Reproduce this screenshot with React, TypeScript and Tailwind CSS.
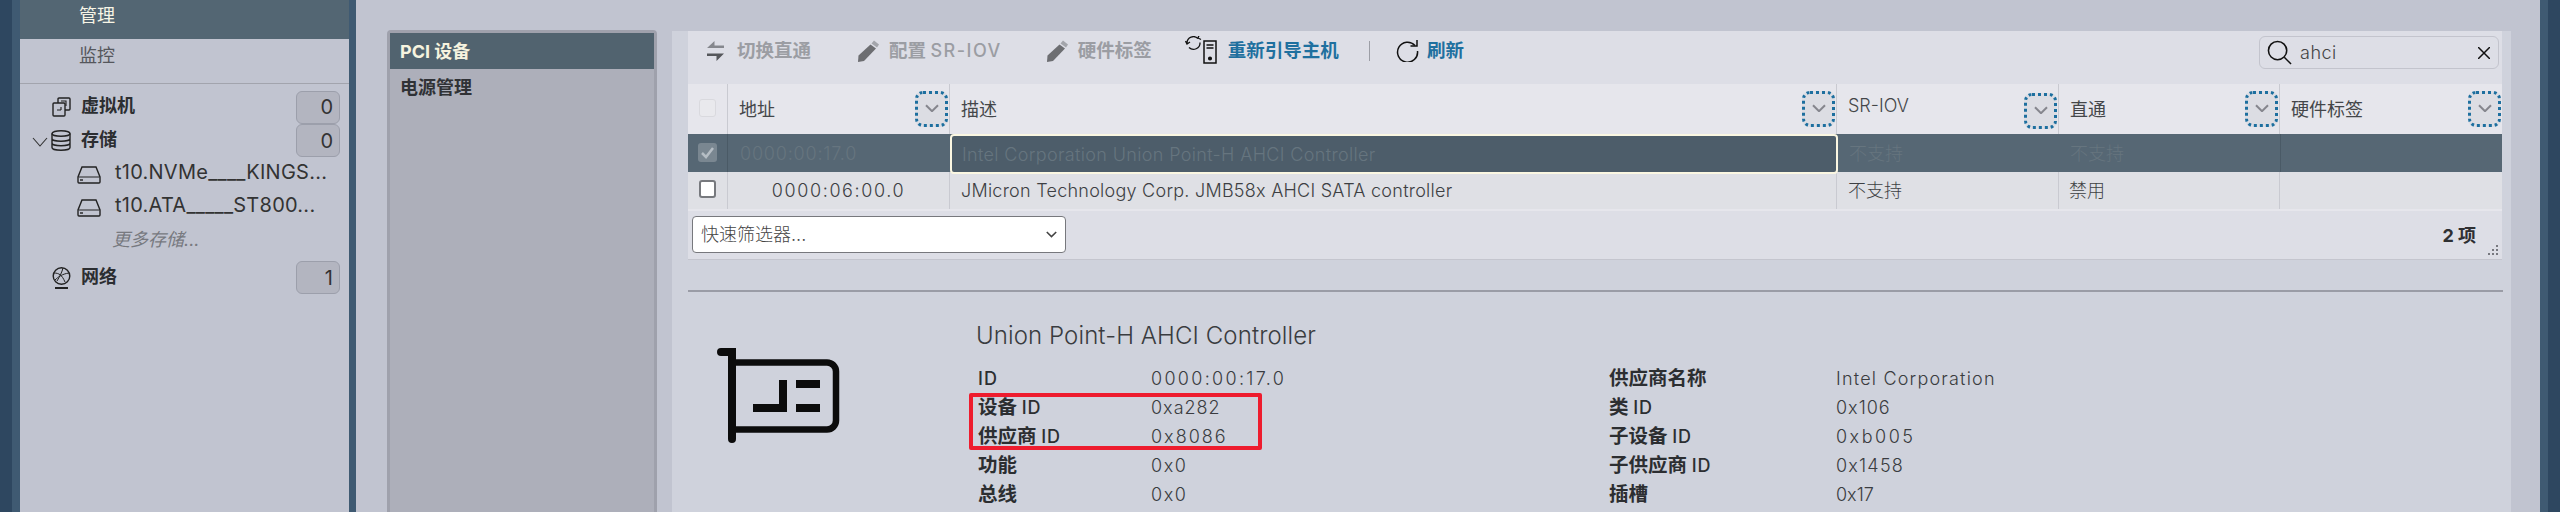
import React from "react";

type Row = { cn: string; id?: string; v: string; t: string };

const dataLeft: Row[] = [
  { cn: "", id: "ID", v: "0000:00:17.0", t: "tracking-[2.3px]" },
  { cn: "设备 ", id: "ID", v: "0xa282", t: "tracking-[1px]" },
  { cn: "供应商 ", id: "ID", v: "0x8086", t: "tracking-[2px]" },
  { cn: "功能", v: "0x0", t: "tracking-[1.6px]" },
  { cn: "总线", v: "0x0", t: "tracking-[1.6px]" },
];
const dataRight: Row[] = [
  { cn: "供应商名称", v: "Intel Corporation", t: "tracking-[1.2px]" },
  { cn: "类 ", id: "ID", v: "0x106", t: "tracking-[1px]" },
  { cn: "子设备 ", id: "ID", v: "0xb005", t: "tracking-[2.5px]" },
  { cn: "子供应商 ", id: "ID", v: "0x1458", t: "tracking-[1.2px]" },
  { cn: "插槽", v: "0x17", t: "tracking-normal" },
];

function Pencil() {
  return (
    <svg width="22" height="22" viewBox="0 0 22 22" className="block">
      <path d="M17 0.500l5 4-2 3-5.500-4z" fill="#a3a5ab" />
      <path d="M13.500 4.500l5.500 4L7 21l-6 1 .5-6.500z" fill="#6d6e72" />
    </svg>
  );
}

function Swap() {
  return (
    <svg width="17" height="20" viewBox="0 0 17 20" fill="none" className="block">
      <path d="M0 7h17v-2.500H7.500V0z" fill="#85878d" />
      <path d="M17 12.500H0V15h9.500v5z" fill="#55575b" />
    </svg>
  );
}

function Chevron({ color = "#85868d", w = 14 }: { color?: string; w?: number }) {
  return (
    <svg width={w} height={w * 0.6} viewBox="0 0 14 8" fill="none" stroke={color} strokeWidth="2">
      <path d="M1 1l6 6 6-6" />
    </svg>
  );
}

function HeaderBtn({ shift = "" }: { shift?: string }) {
  return (
    <div className={`w-[33px] h-9 shrink-0 rounded-lg border-[3px] border-dotted border-[#1d6f9f] bg-[#dcdde3] flex items-end justify-center pb-3 ${shift}`}>
      <Chevron />
    </div>
  );
}

function HeadCell({ label, w, btnShift, labelCls = "" }: { label: string; w: string; btnShift?: string; labelCls?: string }) {
  return (
    <div className={`${w} h-full flex items-center justify-between pl-[11px] pr-px border-r border-[#c9cad1]`}>
      <span className={`text-[18px] text-[#444649] ${labelCls}`}>{label}</span>
      <HeaderBtn shift={btnShift} />
    </div>
  );
}

function Count({ n }: { n: string }) {
  return (
    <div className="ml-auto w-[44px] h-[33px] rounded-md border border-[#9c9fab] bg-[#b3b5c0] flex items-center justify-end pr-[6px] text-[20px] text-[#333]">
      {n}
    </div>
  );
}

function DiskIcon() {
  return (
    <svg width="24" height="18" viewBox="0 0 24 18" fill="none" stroke="#222" strokeWidth="1.400" className="block">
      <path d="M5 1h14l4 10v5a1 1 0 0 1-1 1H2a1 1 0 0 1-1-1v-5z" />
      <path d="M1.500 11h21" strokeWidth="1" />
      <path d="M3 14h3" />
    </svg>
  );
}

function InfoTable({ rows, labelW }: { rows: Row[]; labelW: string }) {
  return (
    <div className="flex flex-col">
      {rows.map((r) => (
        <div key={r.v + r.cn} className="flex items-center h-[29px] text-[18px]">
          <span className={`${labelW} text-[#2c2e31] whitespace-pre text-[19.5px] leading-[29px]`}>
            <span className="font-bold">{r.cn}</span>
            {r.id && <span className="font-medium text-[18px] tracking-[1px]">{r.id}</span>}
          </span>
          <span className={`font-light text-[#3a3c40] ${r.t}`}>{r.v}</span>
        </div>
      ))}
    </div>
  );
}

export default function App() {
  return (
    <div
      className="w-[2560px] h-[512px] overflow-hidden flex bg-[#c1c4d0] text-[#333]"
      style={{ fontFamily: 'Inter, "Noto Sans CJK SC", sans-serif' }}
    >
      <div className="w-3 bg-[#2e4760] shrink-0" />
      <div className="w-2 bg-[#3f5a72] shrink-0" />

      {/* sidebar */}
      <div className="w-[329px] shrink-0 bg-[#c1c4d0] flex flex-col">
        <div className="h-[39px] bg-[#536673] pl-[59px] pb-[9px] flex items-center text-[18px] text-[#f7f5e6]">管理</div>
        <div className="h-[45px] pl-[59px] pt-[3px] text-[18px] text-[#55575c] border-b border-[#a2a4ad]">监控</div>
        <div className="flex flex-col pt-[6px] pr-[9px]">
          <div className="h-[34px] flex items-center pl-[32px]">
            <svg width="19" height="20" viewBox="0 0 19 20" fill="none" stroke="#222" strokeWidth="1.400" className="shrink-0 block">
              <path d="M6 6V2a1 1 0 0 1 1-1h10a1 1 0 0 1 1 1v10a1 1 0 0 1-1 1h-4" />
              <rect x="1" y="6" width="12" height="13" rx="1" />
              <path d="M9 4h5v5M9 13V10M5 13h4" strokeWidth="1.100" />
            </svg>
            <span className="ml-[10px] -mt-[3px] text-[18px] font-bold text-[#2c2e31]">虚拟机</span>
            <Count n="0" />
          </div>
          <div className="h-[33px] flex items-center pl-[12px]">
            <svg width="16" height="10" viewBox="0 0 16 10" fill="none" stroke="#333" strokeWidth="1.100" className="shrink-0 mr-[3px] mt-[3px]">
              <path d="M1 1l7 8 7-8" />
            </svg>
            <svg width="20" height="21" viewBox="0 0 20 21" fill="none" stroke="#222" strokeWidth="1.400" className="shrink-0 block">
              <ellipse cx="10" cy="3.500" rx="9" ry="2.800" />
              <path d="M1 3.500v14c0 1.500 4 2.800 9 2.800s9-1.300 9-2.800v-14M1 8.500c0 1.500 4 2.800 9 2.800s9-1.300 9-2.800M1 13c0 1.500 4 2.800 9 2.800s9-1.300 9-2.800" />
            </svg>
            <span className="ml-[10px] -mt-[3px] text-[18px] font-bold text-[#2c2e31]">存储</span>
            <Count n="0" />
          </div>
          <div className="h-[33px] flex items-center pl-[57px] text-[20px] text-[#333]">
            <span className="shrink-0 mr-[14px] mt-[2px]"><DiskIcon /></span>
            <span className="whitespace-nowrap -mt-[3px] tracking-[0.25px]">t10.NVMe____KINGS...</span>
          </div>
          <div className="h-[33px] flex items-center pl-[57px] text-[20px] text-[#333]">
            <span className="shrink-0 mr-[14px] mt-[2px]"><DiskIcon /></span>
            <span className="whitespace-nowrap -mt-[3px] tracking-[0.25px]">t10.ATA_____ST800...</span>
          </div>
          <div className="h-[34px] flex items-center pl-[92px] text-[18px] italic text-[#77797f] -mt-px">更多存储...</div>
          <div className="h-[37px] mt-[3px] flex items-center pl-[32px]">
            <svg width="19" height="22" viewBox="0 0 19 22" fill="none" stroke="#222" strokeWidth="1.400" className="shrink-0 block">
              <circle cx="9.500" cy="9" r="8.300" />
              <path d="M2 6c5 0 8 2 11 9M3 13c3-3 7-6 14-7M11 1c-1 4-3 8-6 13" strokeWidth="1" />
              <path d="M3 21h13" strokeWidth="2" />
            </svg>
            <span className="ml-[10px] -mt-[3px] text-[18px] font-bold text-[#2c2e31]">网络</span>
            <Count n="1" />
          </div>
        </div>
      </div>

      <div className="w-[7px] bg-[#3f5a72] shrink-0" />

      {/* sub navigation */}
      <div className="pl-[31px] pt-[30px] shrink-0">
        <div className="w-[270px] h-[482px] border-[3px] border-b-0 border-[#9fa1ac] rounded-t bg-[#adafba]">
          <div className="h-[36px] bg-[#51636f] pl-[10px] flex items-center text-[18px] font-bold text-[#f6f3df]">PCI 设备</div>
          <div className="h-[36px] pl-[10px] flex items-center text-[18px] font-bold text-[#303236]">电源管理</div>
        </div>
      </div>

      {/* content */}
      <div className="ml-[15px] mt-[31px] w-[1839px] shrink-0 bg-[#cfd2dc] relative">
        <div className="ml-[16px] mr-[9px]">
          {/* toolbar */}
          <div className="h-[53px] bg-[#dddee6] flex items-start pt-[5px] text-[18.5px] font-bold">
            <div className="flex items-center h-[30px] pl-[19px] text-[#9b9da3] whitespace-nowrap">
              <Swap />
              <span className="ml-[13px]">切换直通</span>
              <span className="ml-[46px]"><Pencil /></span>
              <span className="ml-[10px]">配置 <span className="font-medium text-[18px] tracking-[1.5px]">SR-IOV</span></span>
              <span className="ml-[44px]"><Pencil /></span>
              <span className="ml-[10px]">硬件标签</span>
            </div>
            <div className="flex items-center h-[30px] ml-[33px] text-[#1f709f] whitespace-nowrap">
              <svg width="32" height="28" viewBox="0 0 32 28" fill="none" stroke="#111" strokeWidth="1.300" className="-mt-[2px]">
                <path d="M13 2.500A6.500 6.500 0 0 0 2 7M0.500 5l1.500 3 3-2M15 6.500a6.500 6.500 0 0 1-11 5" />
                <path d="M16 3.500l-3-1.500 1-2.500" />
                <rect x="19" y="5" width="12" height="22" strokeWidth="1.500" />
                <path d="M21.500 9h7M21.500 12h7" />
                <circle cx="25" cy="22.500" r="1.400" fill="#111" />
              </svg>
              <span className="ml-[11px]">重新引导主机</span>
              <span className="ml-[30px] w-px h-[20px] bg-[#9c9ea6]" />
              <svg width="24" height="22" viewBox="0 0 24 22" fill="none" stroke="#111" strokeWidth="1.500" className="ml-[25px]">
                <path d="M20 5.500A10 10 0 1 0 22.500 11" />
                <path d="M22 0v6h-6.500" />
              </svg>
              <span className="ml-[8px]">刷新</span>
            </div>
            <div className="ml-auto mr-[3px] w-[240px] h-[33px] rounded-md border border-[#c3c4cd] flex items-center pl-[7px] pr-[8px]">
              <svg width="25" height="25" viewBox="0 0 26 26" fill="none" stroke="#111" strokeWidth="1.600">
                <circle cx="11" cy="11" r="9.500" />
                <path d="M18 18l7 7" />
              </svg>
              <span className="ml-[8px] text-[18px] font-light text-[#444] tracking-[0.5px]">ahci</span>
              <svg width="12" height="12" viewBox="0 0 12 12" stroke="#111" strokeWidth="1.500" className="ml-auto">
                <path d="M0 0l12 12M12 0L0 12" />
              </svg>
            </div>
          </div>

          {/* table */}
          <div className="h-[50px] bg-[#e6e6ec] flex items-center">
            <div className="w-[40px] h-full shrink-0 flex items-center pl-[11px] border-r border-[#c9cad1]">
              <div className="w-[17px] h-[18px] -mt-[2px] rounded-[3px] border border-[#d9d9de] bg-[#e9e9ed]" />
            </div>
            <HeadCell label="地址" w="w-[222px] shrink-0" />
            <HeadCell label="描述" w="w-[887px] shrink-0" />
            <HeadCell label="SR-IOV" w="w-[222px] shrink-0" btnShift="mt-1" labelCls="font-light -mt-2" />
            <HeadCell label="直通" w="w-[221px] shrink-0" />
            <div className="w-[222px] h-full flex items-center justify-between pl-[11px] pr-px">
              <span className="text-[18px] text-[#444649]">硬件标签</span>
              <HeaderBtn />
            </div>
          </div>

          <div className="h-[38px] bg-[#566774] flex text-[18px] text-[#66757f] font-light relative">
            <div className="w-[40px] shrink-0 flex items-center pl-[10px] border-r border-[#4a5a66]">
              <div className="w-[19px] h-[19px] rounded-[3px] bg-[#7a8791] flex items-center justify-center -mt-px">
                <svg width="13" height="12" viewBox="0 0 13 12" fill="none" stroke="#b5bdc4" strokeWidth="2.500"><path d="M1 6l4 4 7-9" /></svg>
              </div>
            </div>
            <div className="w-[222px] shrink-0 pl-[12px] flex items-center tracking-[0.8px]">0000:00:17.0</div>
            <div className="w-[888px] shrink-0 h-[40px] rounded border-2 border-[#fbf7e2] bg-[#4d5d6a] pl-[10px] flex items-center relative tracking-[0.35px]">
              Intel Corporation Union Point-H AHCI Controller
            </div>
            <div className="w-[222px] shrink-0 pl-[11px] flex items-center">不支持</div>
            <div className="w-[221px] shrink-0 pl-[10px] flex items-center border-r border-[#4a5a66]">不支持</div>
          </div>
          <div className="h-[37px] bg-[#dfe0e5] flex items-center text-[18px] font-light text-[#3d3f43] border-b-2 border-[#e6e6ec] box-content">
            <div className="w-[40px] h-full shrink-0 flex items-center pl-[11px] border-r border-[#c9cad1]">
              <div className="w-[17px] h-[18px] -mt-[3px] rounded-[3px] border-2 border-[#77797e] bg-white" />
            </div>
            <div className="w-[222px] h-full shrink-0 flex items-center justify-center border-r border-[#c9cad1] tracking-[1.600px]">0000:06:00.0</div>
            <div className="w-[887px] h-full shrink-0 pl-[11px] flex items-center border-r border-[#c9cad1] tracking-[0.25px]">JMicron Technology Corp. JMB58x AHCI SATA controller</div>
            <div className="w-[222px] h-full shrink-0 pl-[11px] flex items-center border-r border-[#c9cad1]">不支持</div>
            <div className="w-[221px] h-full shrink-0 pl-[10px] flex items-center border-r border-[#c9cad1]">禁用</div>
          </div>

          {/* footer */}
          <div className="h-[49px] bg-[#dddee6] border-b border-[#c4c5ce] flex items-start pt-[5px] pl-[4px] relative">
            <div className="w-[374px] h-[37px] rounded border border-[#77787d] bg-white flex items-center justify-between pl-[8px] pr-[8px] text-[18px] font-light text-[#444]">
              <span>快速筛选器...</span>
              <Chevron color="#444" w={11} />
            </div>
            <span className="ml-auto mr-[26px] mt-[6px] text-[18px] font-bold text-[#2f3033]">2 项</span>
            <svg width="10" height="10" viewBox="0 0 10 10" fill="#77787f" className="absolute right-[4px] bottom-[4px]">
              <rect x="8" y="0" width="2" height="2" /><rect x="4" y="4" width="2" height="2" /><rect x="8" y="4" width="2" height="2" />
              <rect x="0" y="8" width="2" height="2" /><rect x="4" y="8" width="2" height="2" /><rect x="8" y="8" width="2" height="2" />
            </svg>
          </div>
        </div>

        {/* details */}
        <div className="ml-[16px] mr-[8px] mt-[30px] border-t-2 border-[#9a9ca6] flex items-start">
          <svg width="123" height="96" viewBox="0 0 123 96" fill="none" stroke="#0c0c0c" className="ml-[29px] mt-[56px] shrink-0">
            <path d="M4 4H15V91" strokeWidth="8" strokeLinecap="round" />
            <path d="M15 14.500H110a9 9 0 0 1 9 9V72.500a9 9 0 0 1-9 9H15" strokeWidth="6.500" />
            <path d="M36 60H66V32" strokeWidth="8" />
            <path d="M79 36H103M79 60H103" strokeWidth="8" />
          </svg>
          <div className="ml-[137px] mt-[29px] flex flex-col">
            <div className="text-[24px] leading-[30px] font-light text-[#3a3c40] -ml-px tracking-[0.1px]">Union Point-H AHCI Controller</div>
            <div className="flex mt-[13px]">
              <div className="w-[632px] pl-[1px]">
                <InfoTable rows={dataLeft} labelW="w-[173px]" />
              </div>
              <InfoTable rows={dataRight} labelW="w-[227px]" />
            </div>
          </div>
        </div>

        {/* annotation */}
        <div className="absolute left-[297px] top-[362px] w-[293px] h-[57px] border-4 border-[#ee1c2e] rounded-[2px]" />
      </div>

      <div className="flex-1" />
      <div className="w-2 bg-[#3f5a72] shrink-0" />
      <div className="w-3 bg-[#2e4760] shrink-0" />
    </div>
  );
}
